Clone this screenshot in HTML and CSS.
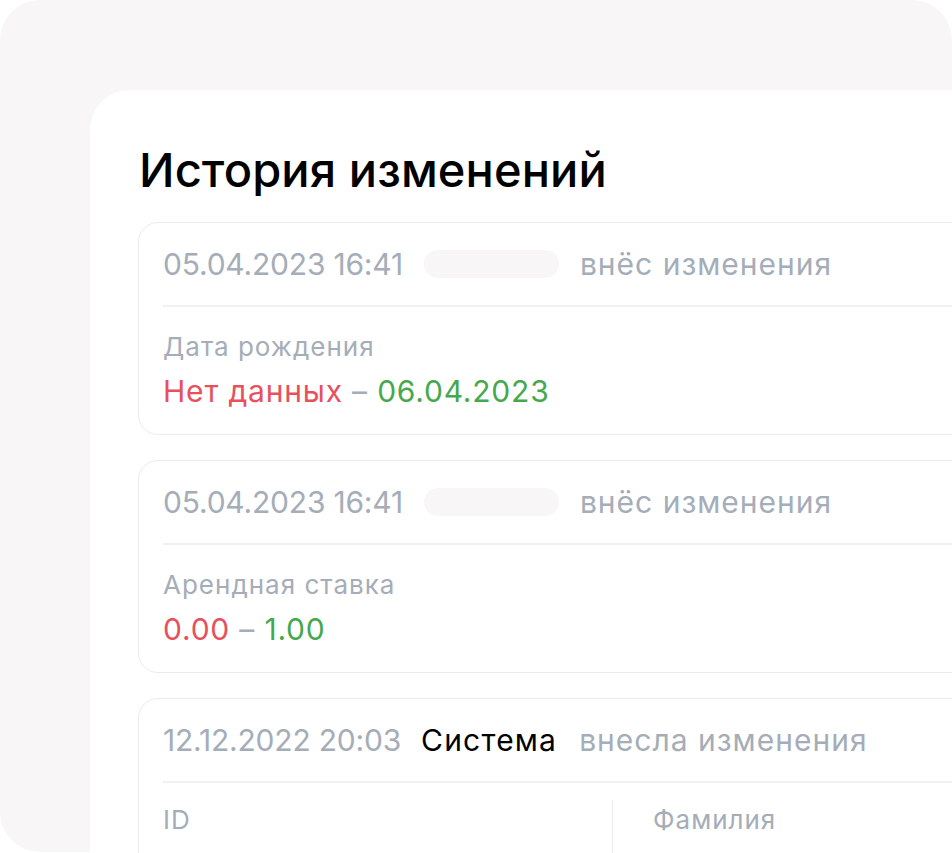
FILE: index.html
```html
<!DOCTYPE html>
<html lang="ru">
<head>
<meta charset="utf-8">
<link rel="stylesheet" href="styles.css">
</head>
<body>
<div class="frame">
  <div class="panel">
    <h1 class="title">История изменений</h1>
    <div class="list">
      <div class="card">
        <div class="card-head">
          <span class="date">05.04.2023 16:41</span>
          <span class="pill"></span>
          <span class="action">внёс изменения</span>
        </div>
        <div class="card-body">
          <div class="field">
            <div class="label">Дата рождения</div>
            <div class="value"><span class="old">Нет данных</span> <span class="dash">–</span> <span class="new">06.04.2023</span></div>
          </div>
        </div>
      </div>
      <div class="card">
        <div class="card-head">
          <span class="date">05.04.2023 16:41</span>
          <span class="pill"></span>
          <span class="action">внёс изменения</span>
        </div>
        <div class="card-body">
          <div class="field">
            <div class="label">Арендная ставка</div>
            <div class="value"><span class="old">0.00</span> <span class="dash">–</span> <span class="new">1.00</span></div>
          </div>
        </div>
      </div>
      <div class="card card-tall">
        <div class="card-head">
          <span class="date">12.12.2022 20:03</span>
          <span class="author">Система</span>
          <span class="action">внесла изменения</span>
        </div>
        <div class="cols">
          <div class="col">
            <div class="label">ID</div>
          </div>
          <div class="col col-sep">
            <div class="label">Фамилия</div>
          </div>
        </div>
      </div>
    </div>
  </div>
</div>
</body>
</html>
```

FILE: styles.css
```css
html, body {
  margin: 0;
  padding: 0;
  background: #ffffff;
  overflow: hidden;
  width: 952px;
  height: 853px;
}
body {
  font-family: "Inter", "Noto Sans", sans-serif;
  color: #000;
}
.frame {
  box-sizing: border-box;
  width: 952px;
  height: 852px;
  background: #f8f6f7;
  border-radius: 40px;
  padding: 90px 0 0 90px;
}
.panel {
  background: #ffffff;
  border-top-left-radius: 40px;
  height: 800px;
  padding: 50px 0 0 48px;
  box-sizing: border-box;
}
.title {
  margin: 0 0 22px 1px;
  font-size: 47px;
  line-height: 60px;
  font-weight: 500;
  letter-spacing: 0.1px;
  color: #000;
}
.list {
  display: flex;
  flex-direction: column;
  gap: 25px;
}
.card {
  width: 900px;
  border: 1px solid #ebebed;
  border-radius: 20px;
  box-sizing: border-box;
  padding: 0 0 0 24px;
  height: 213px;
  flex-shrink: 0;
}
.card-tall {
  height: 300px;
}
.card-head {
  display: flex;
  align-items: center;
  height: 82px;
  border-bottom: 2px solid #f1f1f3;
  font-size: 30px;
}
.date {
  color: #a5adb8;
  letter-spacing: -0.2px;
}
.pill {
  width: 135px;
  height: 28px;
  border-radius: 14px;
  background: #f8f6f7;
  margin: 0 21px 0 21px;
}
.author {
  color: #000;
  letter-spacing: 1.2px;
  margin: 0 22px 0 20px;
}
.action {
  color: #a5adb8;
  letter-spacing: 1px;
}
.card-body {
  padding-top: 22px;
}
.label {
  font-size: 26px;
  line-height: 36px;
  letter-spacing: 1px;
  color: #a5adb8;
}
.value {
  font-size: 30px;
  line-height: 44px;
  letter-spacing: 0.8px;
  margin-top: 4px;
}
.old { color: #e8505b; }
.new { color: #46a84c; }
.dash { color: #a5adb8; }
.cols {
  display: flex;
  padding-top: 17px;
}
.col {
  flex: 0 0 449px;
  height: 80px;
  padding-top: 2px;
  box-sizing: border-box;
}
.col-sep {
  border-left: 1px solid #ebebed;
  padding-left: 40px;
}
```
